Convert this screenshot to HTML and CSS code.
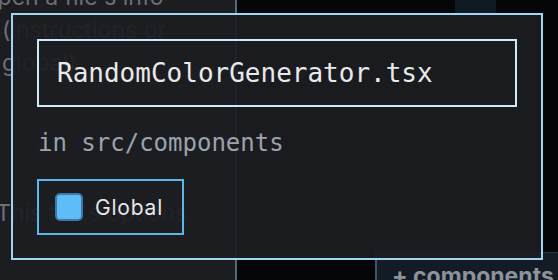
FILE: index.html
```html
<!DOCTYPE html>
<html>
<head>
<meta charset="utf-8">
<link rel="stylesheet" href="styles.css">
</head>
<body>
<div class="scene">
  <div class="left">
    <div class="help">
      <p class="line">Open a file's info</p>
      <p class="line">(instructions or</p>
      <p class="line">global).</p>
      <p class="line note">This file's options</p>
    </div>
  </div>
  <div class="right">
    <div class="tab"></div>
    <div class="spacer"></div>
    <div class="folder">+ components</div>
  </div>
</div>

<div class="dialog">
  <div class="filename">RandomColorGenerator.tsx</div>
  <div class="path">in src/components</div>
  <div class="toggle">
    <span class="check"></span>
    <span class="label">Global</span>
  </div>
</div>
</body>
</html>
```

FILE: styles.css
```css
* { box-sizing: border-box; }

html, body {
  margin: 0;
  padding: 0;
  width: 558px;
  height: 280px;
  overflow: hidden;
  background: #050607;
}

.scene {
  display: flex;
  width: 558px;
  height: 280px;
  overflow: hidden;
}

.left {
  width: 237px;
  flex: none;
  background: #1b1d21;
  border-right: 2px solid #55697a;
  overflow: hidden;
}

.help {
  margin-top: -19px;
  margin-left: -20px;
  font-family: "Inter", "Liberation Sans", sans-serif;
  font-size: 23px;
  line-height: 33px;
  color: #6c6f75;
  white-space: nowrap;
}

.help .line {
  margin: 0;
}

.help .line:nth-child(2),
.help .line:nth-child(3) {
  margin-left: 22px;
}

.help .note {
  margin-top: 117px;
  margin-left: 16px;
}

.right {
  flex: 1;
  display: flex;
  flex-direction: column;
  background: #050607;
}

.tab {
  margin-left: 218px;
  width: 41px;
  height: 13px;
  background: #111922;
}

.spacer { flex: 1; }

.folder {
  margin-left: 138px;
  height: 28px;
  background: #131c25;
  border-left: 2px solid #3e5566;
  border-top: 1px solid #2b3a47;
  padding-left: 15px;
  padding-top: 9px;
  font-family: "Inter", "Liberation Sans", sans-serif;
  font-weight: 700;
  font-size: 23px;
  line-height: 28px;
  color: #8c939c;
  white-space: nowrap;
  overflow: hidden;
}

.dialog {
  position: absolute;
  left: 11px;
  top: 13px;
  width: 532px;
  height: 247px;
  border: 2px solid #a2d4f4;
  background: rgba(28, 29, 33, 0.93);
  padding: 24px 24px 23px;
}

.filename {
  width: 480px;
  height: 68px;
  border: 2px solid #cde9fa;
  padding: 16px 18px;
  font-family: "DejaVu Sans Mono", monospace;
  font-size: 26px;
  line-height: 32px;
  color: #e8e9eb;
  white-space: nowrap;
}

.path {
  margin-top: 20px;
  font-family: "DejaVu Sans Mono", monospace;
  font-size: 24px;
  line-height: 32px;
  color: #9ba3ae;
  padding-left: 1px;
}

.toggle {
  margin-top: 20px;
  display: inline-flex;
  align-items: center;
  gap: 12px;
  height: 56px;
  padding: 0 19px 0 16px;
  border: 2px solid #5ab6ec;
}

.check {
  width: 28px;
  height: 28px;
  border-radius: 5px;
  background: #5ebdf6;
  border: 2px solid #3a7aa6;
}

.label {
  font-family: "Inter", "Liberation Sans", sans-serif;
  font-size: 21px;
  letter-spacing: 0.8px;
  color: #e6e7e9;
}
```
